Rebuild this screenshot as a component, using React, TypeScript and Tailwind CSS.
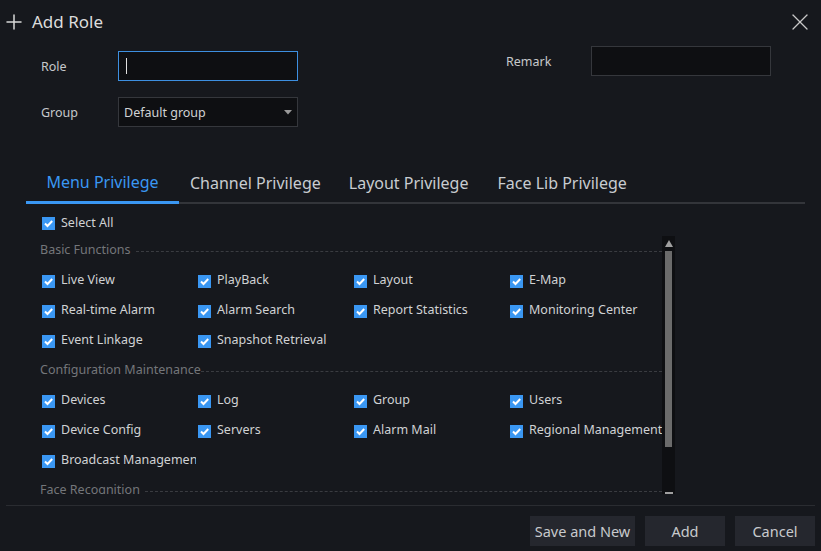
import React from "react";
import { Plus, X } from "lucide-react";

const Check = () => (
  <span className="inline-flex h-[13px] w-[13px] shrink-0 items-center justify-center bg-[#3a97f3]">
    <svg width="13" height="13" viewBox="0 0 13 13">
      <polyline points="3,6.5 5.5,9 10.2,4" fill="none" stroke="#ffffff" strokeWidth="2" />
    </svg>
  </span>
);

const Item = ({ label }: { label: string }) => (
  <div className="flex h-[30px] items-center pl-[2px] overflow-hidden whitespace-nowrap">
    <Check />
    <span className="ml-[6px] -mt-[1px] text-[12.5px] text-[#d0d2d4]">{label}</span>
  </div>
);

const Section = ({ title, gap }: { title: string; gap: boolean }) => (
  <div className="flex h-[30px] items-center">
    <span className="-mt-[2px] text-[12.5px] text-[#74767a] whitespace-nowrap">{title}</span>
    <div className={`flex-1 border-t border-dashed border-[#3a3c41] ${gap ? "ml-[5px]" : "ml-0"}`} />
  </div>
);

const Grid = ({ items }: { items: string[] }) => (
  <div className="grid grid-cols-[156px_156px_156px_1fr]">
    {items.map((i) => (
      <Item key={i} label={i} />
    ))}
  </div>
);

export default function App() {
  return (
    <div
      className="flex h-[551px] w-[821px] flex-col bg-[#16181d] text-[#d0d2d4]"
      style={{ fontFamily: '"Noto Sans", "Open Sans", sans-serif' }}
    >
      {/* header */}
      <div className="flex h-[44px] items-center justify-between pl-[2px] pr-[7px]">
        <div className="flex items-center">
          <Plus size={24} strokeWidth={1.5} className="text-[#d8d8d8]" />
          <span className="ml-[6px] text-[17px] text-[#dcdcdc]">Add Role</span>
        </div>
        <X size={28} strokeWidth={1.1} className="text-[#c8c8c8]" />
      </div>

      {/* form */}
      <div className="mt-[2px] flex">
        <div className="pl-[41px] pt-[5px]">
          <div className="flex h-[30px] items-center">
            <span className="w-[77px] pt-[3px] text-[12.5px] text-[#c6c8cb]">Role</span>
            <div className="flex h-[30px] w-[180px] items-center border border-[#3d8fe0] bg-[#0e0f12] pl-[7px]">
              <div className="h-[16px] w-[1px] bg-[#e0e0e0]" />
            </div>
          </div>
          <div className="mt-[16px] flex h-[30px] items-center">
            <span className="w-[77px] pt-[3px] text-[12.5px] text-[#c6c8cb]">Group</span>
            <div className="flex h-[30px] w-[180px] items-center justify-between border border-[#35373c] bg-[#0e0f12] pl-[5px] pr-[5px]">
              <span className="pt-[2px] text-[12.5px] text-[#d0d2d4]">Default group</span>
              <svg width="8" height="5" viewBox="0 0 8 5">
                <polygon points="0,0 8,0 4,4.5" fill="#9a9a9a" />
              </svg>
            </div>
          </div>
        </div>
        <div className="ml-[208px] flex h-[30px] items-center">
          <span className="w-[85px] pt-[2px] text-[12.5px] text-[#c6c8cb]">Remark</span>
          <div className="h-[30px] w-[180px] border border-[#35373c] bg-[#0e0f12]" />
        </div>
      </div>

      {/* tabs */}
      <div className="ml-[26px] mt-[41px] flex h-[36px] w-[779px] items-stretch border-b-2 border-[#33353a]">
        <div className="-mb-[2px] flex w-[153px] items-center justify-center border-b-[3px] border-[#3a97f3] pb-[5px] text-[16px] text-[#3a97f3]">
          Menu Privilege
        </div>
        <div className="ml-[11px] flex items-center pb-[4px] text-[16px] text-[#c8ccd0]">Channel Privilege</div>
        <div className="ml-[28px] flex items-center pb-[4px] text-[16px] text-[#c8ccd0]">Layout Privilege</div>
        <div className="ml-[29px] flex items-center pb-[4px] text-[16px] text-[#c8ccd0]">Face Lib Privilege</div>
      </div>

      {/* select all */}
      <div className="ml-[40px] mt-[6px] flex h-[26px] items-center pl-[2px]">
        <Check />
        <span className="ml-[6px] text-[12.5px] text-[#d0d2d4]">Select All</span>
      </div>

      {/* scroll area */}
      <div className="ml-[40px] flex h-[258px] w-[635px]">
        <div className="flex-1 overflow-hidden">
          <Section title="Basic Functions" gap />
          <Grid
            items={[
              "Live View",
              "PlayBack",
              "Layout",
              "E-Map",
              "Real-time Alarm",
              "Alarm Search",
              "Report Statistics",
              "Monitoring Center",
              "Event Linkage",
              "Snapshot Retrieval",
            ]}
          />
          <Section title="Configuration Maintenance" gap={false} />
          <Grid
            items={[
              "Devices",
              "Log",
              "Group",
              "Users",
              "Device Config",
              "Servers",
              "Alarm Mail",
              "Regional Management",
              "Broadcast Managemen",
            ]}
          />
          <Section title="Face Recognition" gap />
        </div>
        <div className="flex w-[13px] flex-col items-center bg-[#0e0f12]">
          <svg width="8" height="7" viewBox="0 0 8 7" className="mt-[4px]">
            <polygon points="4,0 8,7 0,7" fill="#a0a0a0" />
          </svg>
          <div className="mt-[4px] h-[196px] w-[7px] bg-[#6b6b6b]" />
          <div className="flex-1" />
          <div className="h-[2px] w-[8px] bg-[#a0a0a0]" />
        </div>
      </div>

      {/* footer */}
      <div className="mx-[6px] mt-[11px] border-t border-[#2a2c31]" />
      <div className="mt-[10px] flex justify-end gap-[10px] pr-[6px]">
        <button className="h-[30px] w-[105px] bg-[#25272e] pt-[1px] text-[14.5px] text-[#c8cacd]">Save and New</button>
        <button className="h-[30px] w-[80px] bg-[#25272e] pt-[1px] text-[14.5px] text-[#c8cacd]">Add</button>
        <button className="h-[30px] w-[80px] bg-[#25272e] pt-[1px] text-[14.5px] text-[#c8cacd]">Cancel</button>
      </div>
    </div>
  );
}
